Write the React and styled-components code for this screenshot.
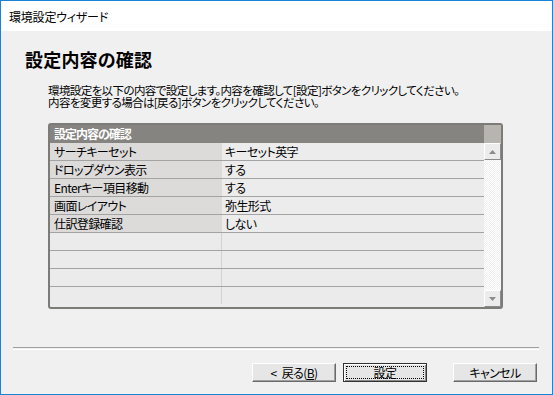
import React from 'react'
import styled, { createGlobalStyle } from 'styled-components'

const GlobalStyle = createGlobalStyle`
  html, body {
    margin: 0;
    padding: 0;
    background: #f0f0f0;
  }
  body {
    font-family: "Noto Sans CJK JP", "Liberation Sans", sans-serif;
    font-size: 12px;
    color: #000;
  }
`

const rows = [
  { key: 'サーチキーセット', value: 'キーセット英字' },
  { key: 'ドロップダウン表示', value: 'する' },
  { key: 'Enterキー項目移動', value: 'する' },
  { key: '画面レイアウト', value: '弥生形式' },
  { key: '仕訳登録確認', value: 'しない' },
  { key: '', value: '' },
  { key: '', value: '' },
  { key: '', value: '' },
  { key: '', value: '' },
]

const App = () => {
  return (
    <>
      <GlobalStyle />
      <Window>
        <TitleBar>環境設定ウィザード</TitleBar>
        <Body>
          <Heading>設定内容の確認</Heading>
          <Note>
            <NoteLine>環境設定を以下の内容で設定します。内容を確認して[設定]ボタンをクリックしてください。</NoteLine>
            <NoteLine>内容を変更する場合は[戻る]ボタンをクリックしてください。</NoteLine>
          </Note>
          <Panel>
            <Grid>
              <HeaderRow>設定内容の確認</HeaderRow>
              {rows.map((r, i) => (
                <Row key={i}>
                  <KeyCell $empty={!r.key}>{r.key}</KeyCell>
                  <ValueCell $empty={!r.key}>{r.value}</ValueCell>
                </Row>
              ))}
            </Grid>
            <ScrollBar>
              <Corner />
              <ArrowButton>
                <Arrow viewBox="0 0 7 4"><path d="M3.5 0 L7 4 L0 4 Z" /></Arrow>
              </ArrowButton>
              <Track />
              <ArrowButton>
                <Arrow viewBox="0 0 7 4"><path d="M0 0 L7 0 L3.5 4 Z" /></Arrow>
              </ArrowButton>
            </ScrollBar>
          </Panel>
        </Body>
        <Separator />
        <ButtonBar>
          <Button>
            <Chevron>&lt;</Chevron>戻る(<u>B</u>)
          </Button>
          <Button $primary>
            <Focus>設定</Focus>
          </Button>
          <Spacer />
          <Button>キャンセル</Button>
        </ButtonBar>
      </Window>
    </>
  )
}

const Window = styled.div`
  width: 553px;
  height: 395px;
  box-sizing: border-box;
  border: 1px solid #1883d7;
  background: #f0f0f0;
  display: flex;
  flex-direction: column;
  overflow: hidden;
  font-feature-settings: "palt";
`

const TitleBar = styled.div`
  height: 30px;
  background: #ffffff;
  display: flex;
  align-items: center;
  padding-left: 8px;
  font-size: 12px;
  letter-spacing: -0.2px;
`

const Body = styled.div`
  padding: 17px 0 0 24px;
`

const Heading = styled.h1`
  margin: 0;
  font-size: 18px;
  line-height: 22px;
  font-weight: 700;
  letter-spacing: 0.2px;
`

const Note = styled.div`
  margin: 15px 0 0 23px;
  display: flex;
  flex-direction: column;
`

const NoteLine = styled.div`
  height: 12px;
  font-size: 11.5px;
  line-height: 11px;
  letter-spacing: -0.6px;
  white-space: nowrap;
`

const Panel = styled.div`
  margin: 14px 0 0 23px;
  width: 455px;
  height: 186px;
  box-sizing: border-box;
  border: 2px solid #7c7b77;
  border-radius: 3px;
  display: grid;
  grid-template-columns: 1fr 17px;
  background: #ececec;
`

const Grid = styled.div`
  display: flex;
  flex-direction: column;
`

const HeaderRow = styled.div`
  height: 18px;
  background: #858480;
  color: #ffffff;
  font-weight: 700;
  font-size: 12px;
  line-height: 18px;
  padding-left: 4px;
  letter-spacing: -1px;
`

const Row = styled.div`
  height: 17px;
  display: grid;
  grid-template-columns: 172px 1fr;
  border-bottom: 1px solid #a3a3a3;
  &:last-child {
    border-bottom: none;
  }
`

const KeyCell = styled.div`
  background: ${(p) => (p.$empty ? '#ebebeb' : '#dcdbda')};
  border-right: 1px solid ${(p) => (p.$empty ? '#d2d2d2' : '#dcdbda')};
  padding-left: 4px;
  font-size: 12px;
  line-height: 17px;
  white-space: nowrap;
  letter-spacing: -0.6px;
`

const ValueCell = styled.div`
  background: ${(p) => (p.$empty ? '#ebebeb' : '#ececec')};
  padding-left: 3px;
  font-size: 12px;
  line-height: 17px;
  white-space: nowrap;
  letter-spacing: -0.6px;
`

const ScrollBar = styled.div`
  display: flex;
  flex-direction: column;
  background: #f6f6f6;
`

const Corner = styled.div`
  height: 18px;
  background: #b8b5b0;
`

const ArrowButton = styled.div`
  height: 17px;
  box-sizing: border-box;
  background: #ececec;
  border: 1px solid;
  border-color: #ffffff #8a8a8a #8a8a8a #ffffff;
  display: flex;
  align-items: center;
  justify-content: center;
`

const Arrow = styled.svg`
  width: 7px;
  height: 4px;
  fill: #8c8c8c;
`

const Track = styled.div`
  flex: 1;
  background-color: #fafafa;
  background-image: repeating-conic-gradient(#f0f0f0 0 25%, #ffffff 0 50%);
  background-size: 2px 2px;
`

const Separator = styled.div`
  margin: 38px 13px 0 12px;
  height: 1px;
  border-top: 1px solid #a0a0a0;
  border-bottom: 1px solid #ffffff;
`

const ButtonBar = styled.div`
  display: flex;
  gap: 7px;
  margin: 13px 15px 0 251px;
`

const Spacer = styled.div`
  flex: 1;
`

const Button = styled.div`
  width: 84px;
  height: 19px;
  box-sizing: border-box;
  background: #e6e6e6;
  border: 1px solid;
  border-color: ${(p) => (p.$primary ? '#333333' : '#ffffff #6a6a6a #6a6a6a #ffffff')};
  box-shadow: ${(p) =>
    p.$primary
      ? 'inset 1px 1px #ffffff, inset -1px -1px #8a8a8a'
      : 'inset -1px -1px #a0a0a0'};
  display: flex;
  align-items: center;
  justify-content: center;
  font-size: 12px;
  letter-spacing: -0.6px;
  padding: 2px;
  u {
    text-underline-offset: 1px;
  }
`

const Chevron = styled.span`
  margin-right: 5px;
`

const Focus = styled.div`
  flex: 1;
  align-self: stretch;
  border: 1px dotted #000;
  display: flex;
  align-items: center;
  justify-content: center;
  line-height: 11px;
`

export default App
